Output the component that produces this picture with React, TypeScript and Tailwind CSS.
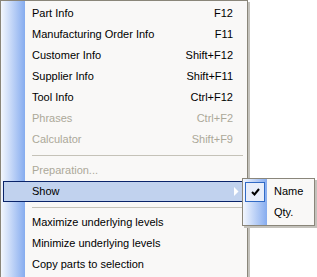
import { Fragment } from 'react';

type Item =
  | { kind: 'item'; label: string; shortcut?: string; disabled?: boolean; active?: boolean; submenu?: boolean }
  | { kind: 'sep' };

const items: Item[] = [
  { kind: 'item', label: 'Part Info', shortcut: 'F12' },
  { kind: 'item', label: 'Manufacturing Order Info', shortcut: 'F11' },
  { kind: 'item', label: 'Customer Info', shortcut: 'Shift+F12' },
  { kind: 'item', label: 'Supplier Info', shortcut: 'Shift+F11' },
  { kind: 'item', label: 'Tool Info', shortcut: 'Ctrl+F12' },
  { kind: 'item', label: 'Phrases', shortcut: 'Ctrl+F2', disabled: true },
  { kind: 'item', label: 'Calculator', shortcut: 'Shift+F9', disabled: true },
  { kind: 'sep' },
  { kind: 'item', label: 'Preparation...', disabled: true },
  { kind: 'item', label: 'Show', active: true, submenu: true },
  { kind: 'sep' },
  { kind: 'item', label: 'Maximize underlying levels' },
  { kind: 'item', label: 'Minimize underlying levels' },
  { kind: 'item', label: 'Copy parts to selection' },
];

function MenuRow({ item }: { item: Item }) {
  if (item.kind === 'sep') {
    return (
      <div className="flex h-[10px] items-center pl-[31px] pr-[4px]">
        <div className="h-px w-full bg-[#c5c2b8]" />
      </div>
    );
  }
  return (
    <div
      className={
        item.active
          ? 'mx-[2px] flex h-[21px] items-center border border-[#0a246a] bg-[#c1d2ee] pl-[28px] pr-[11px]'
          : 'mx-[2px] flex h-[21px] items-center pl-[29px] pr-[12px]'
      }
    >
      <span className={item.disabled ? 'flex-1 text-[#aca899]' : 'flex-1 text-black'}>{item.label}</span>
      {item.shortcut && (
        <span className={item.disabled ? 'text-[#aca899]' : 'text-black'}>{item.shortcut}</span>
      )}
      {item.submenu && (
        <svg width="5" height="9" viewBox="0 0 5 9" className="mr-[-6px]">
          <path d="M0 0 L4.5 4.5 L0 9 Z" fill="#ffffff" />
        </svg>
      )}
    </div>
  );
}

export default function App() {
  return (
    <div className="relative h-[277px] w-[317px] overflow-hidden bg-white font-['Liberation_Sans',Arial,sans-serif] text-[11px] leading-none">
      {/* main menu */}
      <div className="w-[248px] border border-[#8a867a] bg-[#f9f8f7] bg-[linear-gradient(90deg,#f3f7fe_0,#86acef_24px,#f9f8f7_24px)] py-[2px] shadow-[2px_2px_0_#c4c2bc]">
        {items.map((item, i) => (
          <Fragment key={i}>
            <MenuRow item={item} />
          </Fragment>
        ))}
      </div>

      {/* Show submenu */}
      <div className="absolute left-[242px] top-[178px] w-[73px] border border-[#8a867a] bg-[#f9f8f7] bg-[linear-gradient(90deg,#f3f7fe_0,#86acef_24px,#f9f8f7_24px)] py-[2px] shadow-[2px_2px_0_#c4c2bc]">
        <div className="mx-[2px] flex h-[21px] items-center">
          <div className="flex h-[20px] w-[20px] items-center justify-center border border-[#316ac5] bg-[#e8eefa]">
            <svg width="9" height="8" viewBox="0 0 9 8">
              <path d="M1 4 L3.5 6.5 L8 1" fill="none" stroke="#000" strokeWidth="2" />
            </svg>
          </div>
          <span className="pl-[9px] text-black">Name</span>
        </div>
        <div className="mx-[2px] flex h-[21px] items-center pl-[29px]">
          <span className="text-black">Qty.</span>
        </div>
      </div>
    </div>
  );
}
